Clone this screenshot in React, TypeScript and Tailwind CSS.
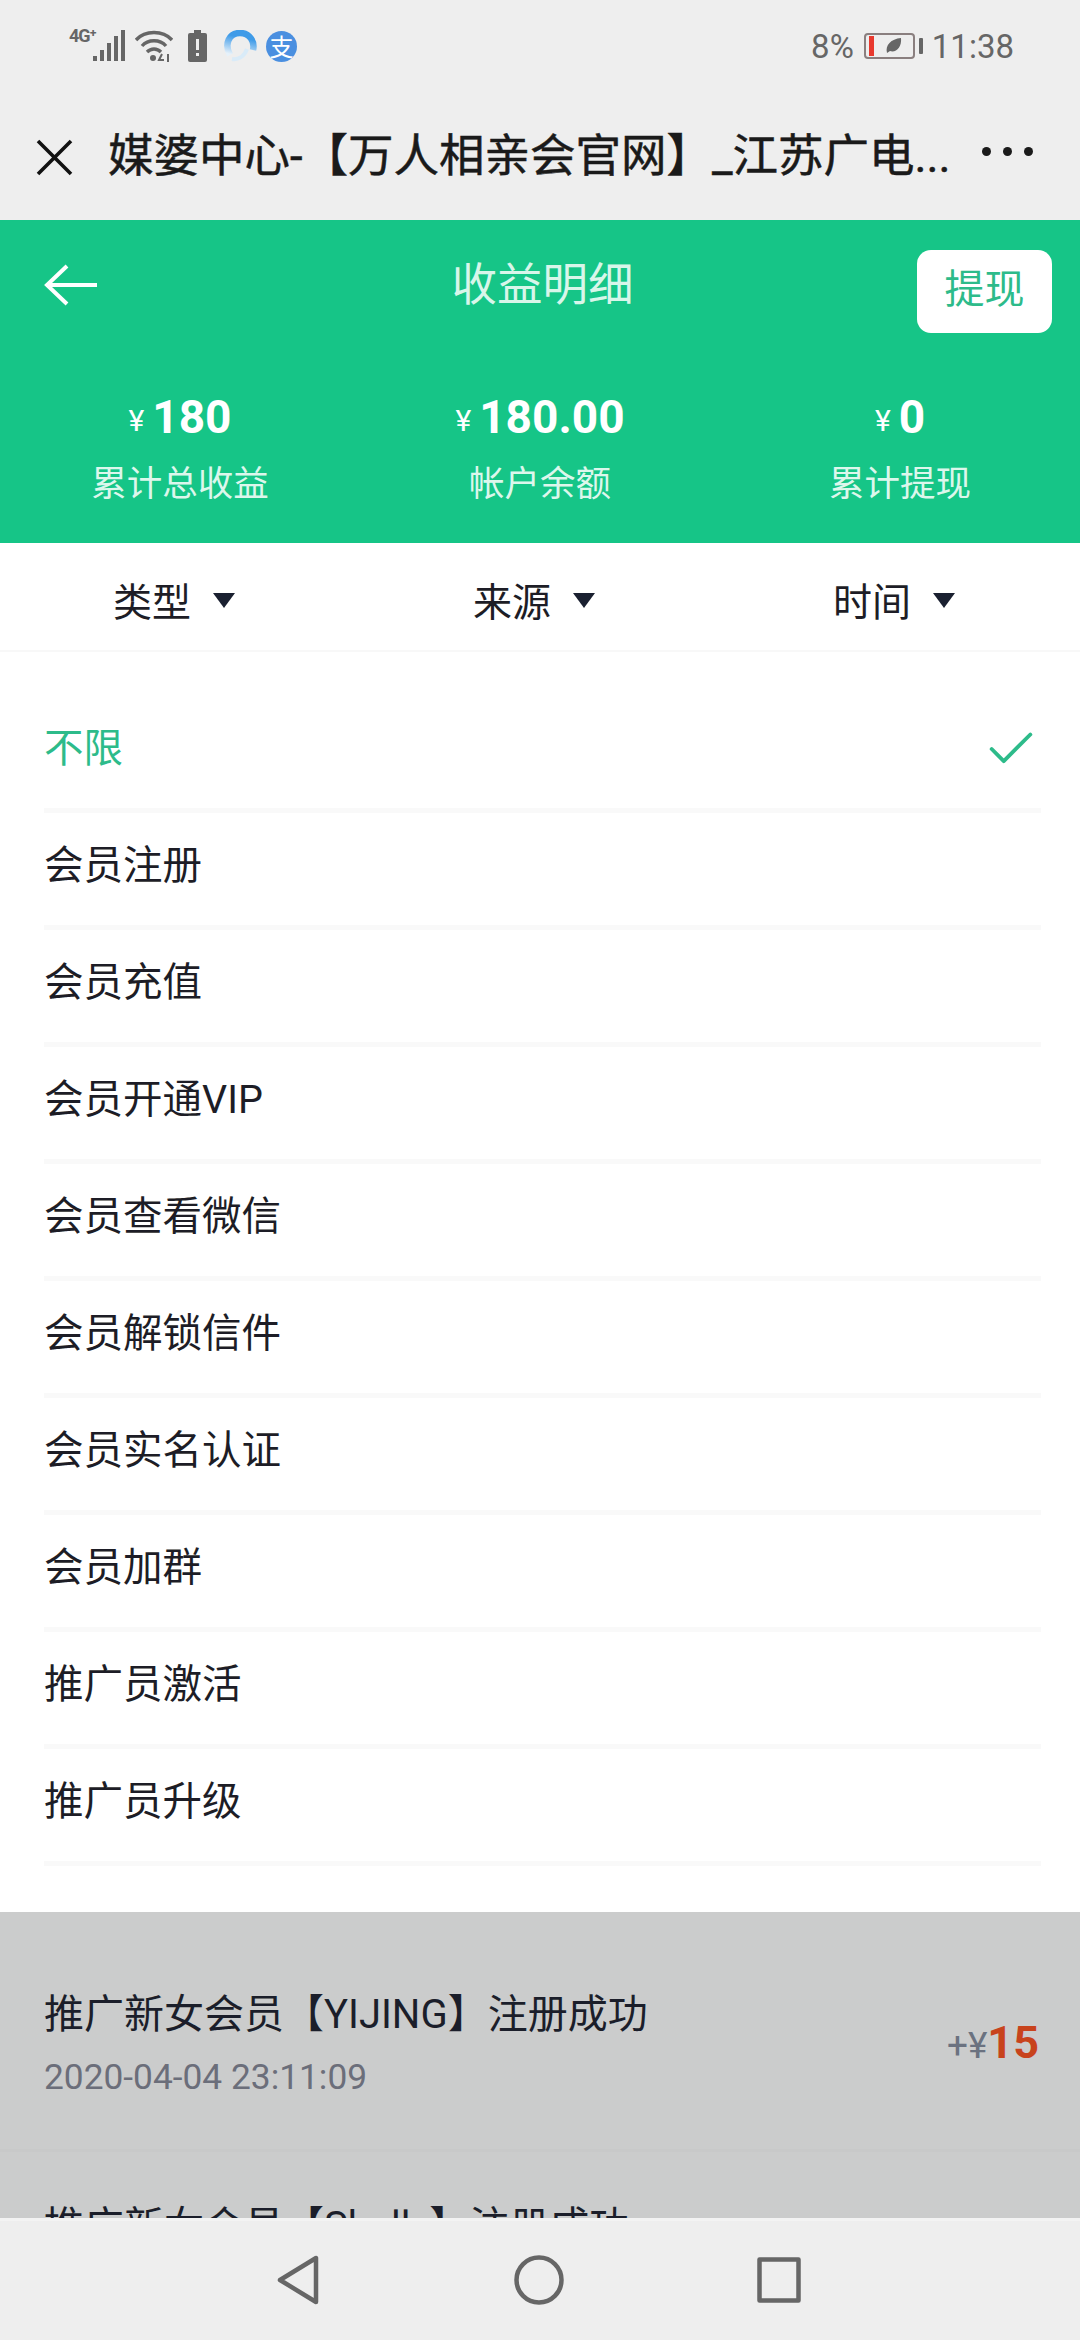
import { Check } from "lucide-react";

const cjk = "font-['Roboto','Noto_Sans_CJK_SC',sans-serif]";

const tongji = [
  { jine: "180", biaoti: "累计总收益" },
  { jine: "180.00", biaoti: "帐户余额" },
  { jine: "0", biaoti: "累计提现" },
];

const shaixuan = ["类型", "来源", "时间"];

const leixing = [
  "不限",
  "会员注册",
  "会员充值",
  "会员开通VIP",
  "会员查看微信",
  "会员解锁信件",
  "会员实名认证",
  "会员加群",
  "推广员激活",
  "推广员升级",
];

const StatusBar = () => (
  <div className="flex h-[92px] items-center justify-between pl-[69px] pr-[66px] text-[#666666]">
    <div className="flex items-center">
      <div className="relative h-[32px] w-[56px]">
        <span className="absolute left-0 top-[-4px] font-['Roboto',sans-serif] text-[18px] font-bold leading-[20px] tracking-[-1px]">4G⁺</span>
        <svg className="absolute left-[24px] top-0" width="32" height="32" viewBox="0 0 32 32" fill="#666666">
          <rect x="0" y="26" width="4" height="5" />
          <rect x="7" y="20" width="4" height="11" />
          <rect x="14" y="13" width="4" height="18" />
          <rect x="21" y="6" width="4" height="25" />
          <rect x="28" y="0" width="4" height="31" />
        </svg>
      </div>
      <svg className="ml-[10px]" width="38" height="32" viewBox="0 0 38 32" fill="none" stroke="#666666" strokeWidth="3.4">
        <path d="M1 10C10 0 28 0 37 10" />
        <path d="M7 16C13 9 25 9 31 16" />
        <path d="M12 22C16 18 22 18 26 22" />
        <circle cx="18" cy="28" r="3" fill="#666666" stroke="none" />
        <path d="M27 24L24 30H29M33 24V32" strokeWidth="2" />
      </svg>
      <svg className="ml-[15px]" width="19" height="32" viewBox="0 0 19 32">
        <rect x="6" y="0" width="7" height="3" fill="#666666" />
        <rect x="0" y="3" width="19" height="29" rx="2" fill="#666666" />
        <rect x="8" y="9" width="3" height="11" fill="#eeeeee" />
        <rect x="8" y="23" width="3" height="3" fill="#eeeeee" />
      </svg>
      <svg className="ml-[16px]" width="34" height="32" viewBox="0 0 34 32" fill="none">
        <defs>
          <linearGradient id="liulanqi" x1="0.3" y1="1" x2="0.5" y2="0.2">
            <stop offset="0" stopColor="#e6f1fa" />
            <stop offset="1" stopColor="#3f9be8" />
          </linearGradient>
        </defs>
        <path d="M7 25C1 14 6 3 17 3C27 3 32 12 30 20" stroke="url(#liulanqi)" strokeWidth="6.5" />
        <path d="M9 29C15 30 21 27 24 19" stroke="#d9ebf8" strokeWidth="4" />
      </svg>
      <div className="ml-[9px] flex h-[31px] w-[31px] items-center justify-center rounded-full bg-[#4a8fe0] font-['Noto_Sans_CJK_SC',sans-serif] text-[24px] leading-none text-white">
        支
      </div>
    </div>
    <div className="flex items-center font-['Roboto',sans-serif] text-[33px] leading-none">
      <span>8%</span>
      <div className="ml-[10px] flex h-[26px] w-[51px] items-center rounded-[4px] border-2 border-[#8a7f7f] pl-[3px]">
        <div className="h-[20px] w-[5px] bg-[#e8392e]" />
        <svg className="ml-[11px]" width="18" height="18" viewBox="0 0 18 18" fill="#666666">
          <path d="M2 16C0 8 6 2 16 1C17 10 11 16 5 14Z" />
        </svg>
      </div>
      <div className="ml-[4px] h-[16px] w-[4px] rounded-[1px] bg-[#666666]" />
      <span className="ml-[9px]">11:38</span>
    </div>
  </div>
);

const TitleBar = () => (
  <div className="flex h-[128px] items-start justify-between pl-[36px] pr-[47px] pt-[41px]">
    <div className="flex items-center">
      <svg width="37" height="37" viewBox="0 0 37 37" fill="none" stroke="#111111" strokeWidth="3.6">
        <path d="M2 2L35 35M35 2L2 35" />
      </svg>
      <span className={`ml-[35px] whitespace-nowrap text-[45.5px] leading-[48px] text-[#1a1a1a] [-webkit-text-stroke:0.5px_#1a1a1a] ${cjk}`}>
        媒婆中心-【万人相亲会官网】_江苏广电...
      </span>
    </div>
    <div className="mt-[14px] flex gap-[12px]">
      <div className="h-[9px] w-[9px] rounded-full bg-[#1a1a1a]" />
      <div className="h-[9px] w-[9px] rounded-full bg-[#1a1a1a]" />
      <div className="h-[9px] w-[9px] rounded-full bg-[#1a1a1a]" />
    </div>
  </div>
);

const GreenHeader = () => (
  <div className="h-[323px] bg-[#16c587] text-white">
    <div className="grid h-[113px] grid-cols-3 items-start pl-[44px] pr-[28px] pt-[30px]">
      <svg className="mt-[14px]" width="54" height="42" viewBox="0 0 54 42" fill="none" stroke="white" strokeWidth="4">
        <path d="M23 2L3 21L23 40M3 21H53" />
      </svg>
      <span className={`ml-[-11px] mt-[7px] whitespace-nowrap text-center text-[45.5px] leading-[58px] text-[#d8f6ea] ${cjk}`}>收益明细</span>
      <button className={`h-[83px] w-[135px] justify-self-end rounded-[14px] bg-white pb-[4px] text-[40px] text-[#2dbb8a] ${cjk}`}>提现</button>
    </div>
    <div className="grid grid-cols-3 pt-[58px]">
      {tongji.map((t) => (
        <div key={t.biaoti} className="flex flex-col items-center">
          <div className="flex h-[52px] items-center font-['Roboto',sans-serif] font-bold">
            <span className="mr-[8px] mt-[6px] text-[30px] font-normal">¥</span>
            <span className="text-[46px] leading-none">{t.jine}</span>
          </div>
          <span className={`mt-[15px] text-[35.5px] leading-[52px] text-[#dcf7ec] ${cjk}`}>{t.biaoti}</span>
        </div>
      ))}
    </div>
  </div>
);

const FilterBar = () => (
  <div className="grid h-[109px] grid-cols-3 border-b-2 border-[#f8f8f8] pt-[13px]">
    {shaixuan.map((s) => (
      <div key={s} className="flex items-center justify-center gap-[22px] pr-[12px]">
        <span className={`text-[39px] text-[#1d1d26] ${cjk}`}>{s}</span>
        <div className="mb-[6px] h-0 w-0 border-x-[11px] border-t-[15px] border-x-transparent border-t-[#1a2030]" />
      </div>
    ))}
  </div>
);

const TypeList = () => (
  <div className="pb-[46px] pt-[44px]">
    {leixing.map((x, i) => (
      <div key={x} className="ml-[44px] mr-[39px] flex h-[117px] items-center justify-between border-b-[5px] border-[#f9f9f9] pb-[6px]">
        <span className={`text-[39.5px] ${i === 0 ? "text-[#2dbb8a]" : "text-[#1d1d26]"} ${cjk}`}>{x}</span>
        {i === 0 && <Check className="mr-[1px] text-[#2dbb8a]" size={58} strokeWidth={1.6} />}
      </div>
    ))}
  </div>
);

const ShouyiRow = ({ title, time, amount }: { title: string; time: string; amount: string }) => (
  <div className="flex h-[215px] items-center justify-between border-b-[3px] border-[#c8c9c9] pl-[44px] pr-[41px]">
    <div>
      <p className={`text-[40px] leading-[60px] text-[#1b1e2a] ${cjk}`}>{title}</p>
      <p className="mt-[7px] font-['Roboto',sans-serif] text-[35.3px] leading-[50px] text-[#6b6e7a]">{time}</p>
    </div>
    <div className="flex items-baseline font-['Roboto',sans-serif]">
      <span className="text-[37px] text-[#6b7280]">+¥</span>
      <span className="text-[45px] font-bold text-[#c8431c]">{amount}</span>
    </div>
  </div>
);

const NavBar = () => (
  <div className="flex h-[122px] shrink-0 items-start justify-center border-t-[3px] border-[#f3f3f3] bg-[#eeeeee] pt-[34px]">
    <svg className="ml-[-2px]" width="42" height="50" viewBox="0 0 42 50" fill="none" stroke="#666666" strokeWidth="4.5" strokeLinejoin="round">
      <path d="M39 3V47L3 25Z" />
    </svg>
    <svg className="ml-[195px]" width="50" height="50" viewBox="0 0 50 50" fill="none" stroke="#666666" strokeWidth="4.5">
      <circle cx="25" cy="25" r="22.5" />
    </svg>
    <svg className="ml-[193px] mt-[2px]" width="44" height="46" viewBox="0 0 44 46" fill="none" stroke="#666666" strokeWidth="4.5" strokeLinejoin="round">
      <rect x="2.5" y="2.5" width="39" height="41" />
    </svg>
  </div>
);

const App = () => (
  <div className="flex h-[2340px] w-[1080px] flex-col overflow-hidden bg-white">
    <div className="shrink-0 bg-[#eeeeee]">
      <StatusBar />
      <TitleBar />
    </div>
    <div className="min-h-0 flex-1 overflow-hidden">
      <GreenHeader />
      <FilterBar />
      <TypeList />
      <div className="bg-[#cbcccc] pt-[25px]">
        <ShouyiRow title="推广新女会员【YIJING】注册成功" time="2020-04-04 23:11:09" amount="15" />
        <p className={`pl-[44px] pt-[45px] text-[40px] leading-[60px] text-[#1b1e2a] ${cjk}`}>推广新女会员【Shelly】注册成功</p>
      </div>
    </div>
    <NavBar />
  </div>
);

export default App;
